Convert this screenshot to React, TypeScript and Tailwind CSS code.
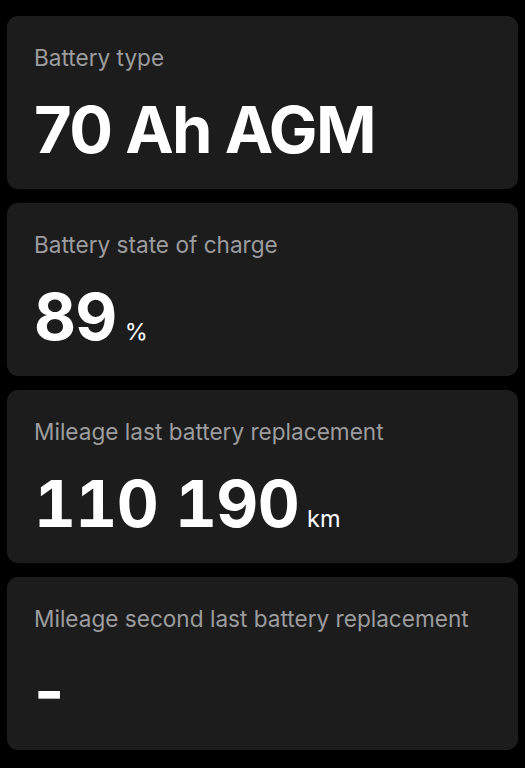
import React from 'react';

type Item = {
  label: string;
  value: string;
  unit?: string;
  valueClass: string;
};

const items: Item[] = [
  { label: 'Battery type', value: '70 Ah AGM', valueClass: 'tracking-[-0.025em]' },
  { label: 'Battery state of charge', value: '89', unit: '%', valueClass: 'tabular-nums tracking-[-0.01em]' },
  { label: 'Mileage last battery replacement', value: '110 190', unit: 'km', valueClass: 'tabular-nums tracking-[-0.01em]' },
  { label: 'Mileage second last battery replacement', value: '-', valueClass: '' },
];

const InfoCard: React.FC<{ item: Item }> = ({ item }) => (
  <div className="h-[173px] rounded-[11px] bg-[#1c1c1d] px-[27px] pt-[31px]">
    <div className="text-[22.6px] leading-none text-[#9c9c9e]">{item.label}</div>
    <div className="mt-[27px] flex items-baseline gap-[8px] text-white">
      <span className={`text-[65px] font-bold leading-none ${item.valueClass}`}>{item.value}</span>
      {item.unit && <span className="text-[23.5px] leading-none">{item.unit}</span>}
    </div>
  </div>
);

const App: React.FC = () => {
  return (
    <div className="min-h-screen bg-black px-[7px] pt-4 font-['Inter',sans-serif]">
      <div className="flex flex-col gap-[14px]">
        {items.map((item) => (
          <InfoCard key={item.label} item={item} />
        ))}
      </div>
    </div>
  );
};

export default App;
